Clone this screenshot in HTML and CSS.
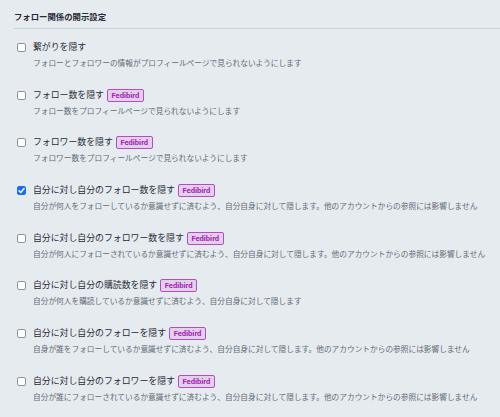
FILE: index.html
```html
<!DOCTYPE html>
<html lang="ja">
<head>
<meta charset="utf-8">
<title>フォロー関係の開示設定</title>
<link rel="stylesheet" href="styles.css">
</head>
<body>
<section class="settings">
  <h4 class="heading">フォロー関係の開示設定</h4>
  <div class="fields">
    <div class="field">
      <div class="label-row"><span class="check"></span><span class="label">繋がりを隠す</span></div>
      <p class="hint">フォローとフォロワーの情報がプロフィールページで見られないようにします</p>
    </div>
    <div class="field">
      <div class="label-row"><span class="check"></span><span class="label">フォロー数を隠す</span><span class="badge">Fedibird</span></div>
      <p class="hint">フォロー数をプロフィールページで見られないようにします</p>
    </div>
    <div class="field">
      <div class="label-row"><span class="check"></span><span class="label">フォロワー数を隠す</span><span class="badge">Fedibird</span></div>
      <p class="hint">フォロワー数をプロフィールページで見られないようにします</p>
    </div>
    <div class="field">
      <div class="label-row"><span class="check checked"><svg viewBox="0 0 10 10" width="9" height="9"><path d="M2.2 5.2 L4.2 7.2 L7.9 2.8" fill="none" stroke="#fff" stroke-width="1.6" stroke-linecap="round" stroke-linejoin="round"/></svg></span><span class="label">自分に対し自分のフォロー数を隠す</span><span class="badge">Fedibird</span></div>
      <p class="hint">自分が何人をフォローしているか意識せずに済むよう、自分自身に対して隠します。他のアカウントからの参照には影響しません</p>
    </div>
    <div class="field">
      <div class="label-row"><span class="check"></span><span class="label">自分に対し自分のフォロワー数を隠す</span><span class="badge">Fedibird</span></div>
      <p class="hint">自分が何人にフォローされているか意識せずに済むよう、自分自身に対して隠します。他のアカウントからの参照には影響しません</p>
    </div>
    <div class="field">
      <div class="label-row"><span class="check"></span><span class="label">自分に対し自分の購読数を隠す</span><span class="badge">Fedibird</span></div>
      <p class="hint">自分が何人を購読しているか意識せずに済むよう、自分自身に対して隠します</p>
    </div>
    <div class="field">
      <div class="label-row"><span class="check"></span><span class="label">自分に対し自分のフォローを隠す</span><span class="badge">Fedibird</span></div>
      <p class="hint">自身が誰をフォローしているか意識せずに済むよう、自分自身に対して隠します。他のアカウントからの参照には影響しません</p>
    </div>
    <div class="field">
      <div class="label-row"><span class="check"></span><span class="label">自分に対し自分のフォロワーを隠す</span><span class="badge">Fedibird</span></div>
      <p class="hint">自分が誰にフォローされているか意識せずに済むよう、自分自身に対して隠します。他のアカウントからの参照には影響しません</p>
    </div>
  </div>
</section>
</body>
</html>
```
FILE: styles.css
```css
html, body {
  margin: 0;
  padding: 0;
  background: #e6ebf0;
}
body {
  font-family: Roboto, "Noto Sans CJK JP", sans-serif;
  color: #282c37;
}
.settings {
  padding: 11px 0 0 14px;
}
.heading {
  margin: 0;
  font-size: 8.4px;
  line-height: 12px;
  font-weight: 700;
  color: #282c37;
  padding-bottom: 5px;
  border-bottom: 1px solid #c9d3dd;
}
.fields {
  display: flex;
  flex-direction: column;
  gap: 19.7px;
  padding: 12px 0 0 3px;
}
.field {
  display: flex;
  flex-direction: column;
}
.label-row {
  display: flex;
  align-items: center;
  height: 13px;
}
.check {
  box-sizing: border-box;
  width: 9px;
  height: 9px;
  border: 1px solid #8d939c;
  border-radius: 2px;
  background: #fff;
  margin-right: 7px;
  flex: none;
  display: flex;
  align-items: center;
  justify-content: center;
}
.check.checked {
  background: #1b6ef3;
  border-color: #1b6ef3;
}
.check svg {
  display: block;
  flex: none;
}
.label {
  font-size: 8.9px;
  line-height: 13px;
  color: #282c37;
  white-space: nowrap;
}
.badge {
  margin-left: 3px;
  box-sizing: border-box;
  height: 13px;
  padding: 0 3.5px;
  border: 1px solid #b74bc7;
  border-radius: 2px;
  background: #e3d0ea;
  color: #a224b4;
  font-size: 7.6px;
  font-weight: 700;
  line-height: 11px;
  display: flex;
  align-items: center;
}
.hint {
  margin: 4px 0 0 16px;
  font-size: 7.7px;
  line-height: 11px;
  color: #646b77;
  white-space: nowrap;
}
```
